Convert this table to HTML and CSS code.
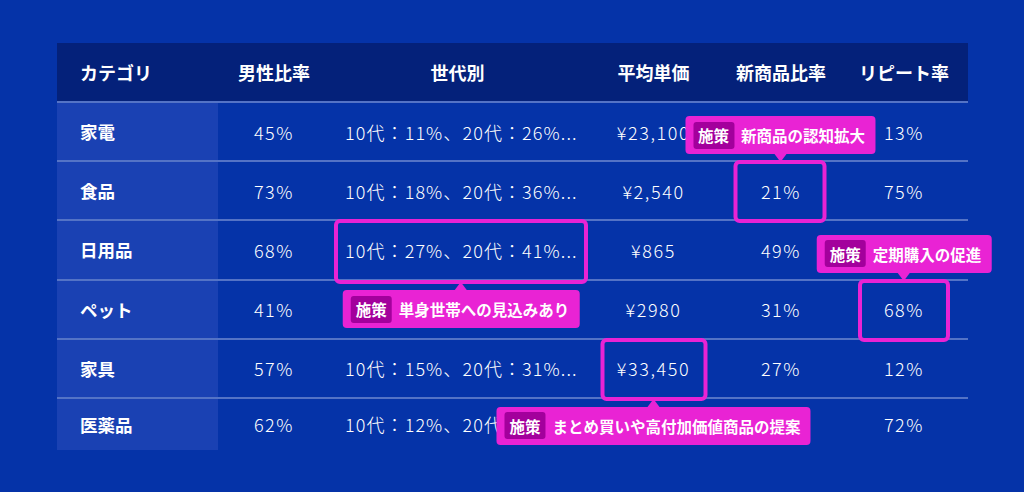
FILE: index.html
```html
<!DOCTYPE html>
<html lang="ja">
<head>
<meta charset="utf-8">
<link rel="stylesheet" href="styles.css">
</head>
<body>
<div class="table">
  <div class="row head">
    <div class="cell first">カテゴリ</div>
    <div class="cell">男性比率</div>
    <div class="cell">世代別</div>
    <div class="cell">平均単価</div>
    <div class="cell">新商品比率</div>
    <div class="cell">リピート率</div>
  </div>
  <div class="row">
    <div class="cell first">家電</div>
    <div class="cell val">45%</div>
    <div class="cell val gen">10代：11%、20代：26%...</div>
    <div class="cell val">¥23,100</div>
    <div class="cell val">49%</div>
    <div class="cell val">13%</div>
  </div>
  <div class="row">
    <div class="cell first">食品</div>
    <div class="cell val">73%</div>
    <div class="cell val gen">10代：18%、20代：36%...</div>
    <div class="cell val">¥2,540</div>
    <div class="cell val anchor">21%
      <div class="hl hl-pct">
        <div class="tip tip-above"><span class="tag">施策</span><span class="msg">新商品の認知拡大</span></div>
      </div>
    </div>
    <div class="cell val">75%</div>
  </div>
  <div class="row">
    <div class="cell first">日用品</div>
    <div class="cell val">68%</div>
    <div class="cell val gen anchor">10代：27%、20代：41%...
      <div class="hl hl-gen">
        <div class="tip tip-below"><span class="tag">施策</span><span class="msg">単身世帯への見込みあり</span></div>
      </div>
    </div>
    <div class="cell val">¥865</div>
    <div class="cell val">49%</div>
    <div class="cell val">49%</div>
  </div>
  <div class="row">
    <div class="cell first">ペット</div>
    <div class="cell val">41%</div>
    <div class="cell val gen">10代：22%、20代：35%...</div>
    <div class="cell val">¥2980</div>
    <div class="cell val">31%</div>
    <div class="cell val anchor">68%
      <div class="hl hl-pct2">
        <div class="tip tip-above"><span class="tag">施策</span><span class="msg">定期購入の促進</span></div>
      </div>
    </div>
  </div>
  <div class="row">
    <div class="cell first">家具</div>
    <div class="cell val">57%</div>
    <div class="cell val gen">10代：15%、20代：31%...</div>
    <div class="cell val anchor">¥33,450
      <div class="hl hl-price">
        <div class="tip tip-below"><span class="tag">施策</span><span class="msg">まとめ買いや高付加価値商品の提案</span></div>
      </div>
    </div>
    <div class="cell val">27%</div>
    <div class="cell val">12%</div>
  </div>
  <div class="row last">
    <div class="cell first">医薬品</div>
    <div class="cell val">62%</div>
    <div class="cell val gen">10代：12%、20代：29%...</div>
    <div class="cell val">¥1,280</div>
    <div class="cell val">18%</div>
    <div class="cell val">72%</div>
  </div>
</div>
</body>
</html>
```

FILE: styles.css
```css
html, body {
  margin: 0;
  padding: 0;
}
body {
  background: #0533a8;
  width: 1024px;
  height: 492px;
  overflow: hidden;
  font-family: "Noto Sans CJK JP", "Noto Sans", sans-serif;
  color: #ffffff;
}
.table {
  margin: 43px 0 0 57px;
  width: 911px;
}
.row {
  display: grid;
  grid-template-columns: 161px 112px 255px 137px 118px 128px;
  height: 57.2px;
  border-bottom: 2px solid #5473c6;
}
.row.head {
  height: 58px;
  background: #04217a;
}
.row.last {
  height: 51px;
  border-bottom: none;
}
.cell {
  display: flex;
  align-items: center;
  justify-content: center;
  font-size: 17.5px;
  font-weight: 400;
  white-space: nowrap;
}
.head .cell {
  font-size: 18px;
  font-weight: 700;
}
.cell.first {
  justify-content: flex-start;
  padding-left: 23px;
  font-weight: 700;
  background: #1a41b3;
}
.head .cell.first {
  background: transparent;
}
.cell.val {
  font-size: 18px;
  font-weight: 300;
  letter-spacing: 1.6px;
  color: #ffffff;
}
.cell.gen {
  justify-content: flex-start;
  padding-left: 15px;
  letter-spacing: 1.1px;
}
.anchor {
  position: relative;
}
.hl {
  position: absolute;
  left: 50%;
  top: -2px;
  transform: translateX(-50%);
  box-sizing: border-box;
  border: 4px solid #e923d4;
  border-radius: 6px;
  z-index: 2;
  letter-spacing: 0;
}
.hl-pct { width: 93px; height: 63px; margin-left: -1px; }
.hl-pct2 { width: 92px; height: 63px; }
.hl-gen { width: 254px; height: 65px; left: 4px; transform: none; top: -2px; }
.hl-price { width: 107px; height: 63px; }
.tip {
  position: absolute;
  left: 50%;
  transform: translateX(-50%);
  display: flex;
  align-items: center;
  gap: 7px;
  padding: 0 10px 0 8px;
  height: 38px;
  background: #e923d4;
  border-radius: 4px;
  white-space: nowrap;
  font-size: 15.5px;
  font-weight: 700;
  letter-spacing: 0;
  color: #ffffff;
}
.tip::after {
  content: "";
  position: absolute;
  left: 50%;
  margin-left: -6px;
  border: 6px solid transparent;
}
.tip-above {
  bottom: calc(100% + 10px);
}
.tip-above::after {
  top: 100%;
  border-top: 8px solid #e923d4;
  border-bottom: none;
}
.tip-below {
  top: calc(100% + 10px);
}
.tip-below::after {
  bottom: 100%;
  border-bottom: 8px solid #e923d4;
  border-top: none;
}
.tag {
  display: inline-flex;
  align-items: center;
  height: 27px;
  padding: 0 5px;
  background: #a3009c;
  border-radius: 3px;
  font-size: 15.5px;
}
```
